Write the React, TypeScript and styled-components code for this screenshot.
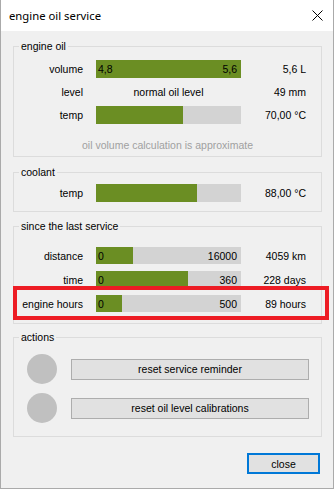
import styled, { createGlobalStyle } from 'styled-components'

const GlobalStyle = createGlobalStyle`
  html, body {
    margin: 0;
    padding: 0;
    background: #f0f0f0;
  }
  body {
    font-family: "Liberation Sans", Arial, sans-serif;
    font-size: 10.5px;
    color: #000;
  }
`

const Window = styled.div`
  width: 334px;
  height: 489px;
  box-sizing: border-box;
  border: 1px solid #aaaaaa;
  border-top: none;
  background: #f0f0f0;
  display: flex;
  flex-direction: column;
`

const TitleBar = styled.div`
  height: 31px;
  flex-shrink: 0;
  background: #ffffff;
  display: flex;
  align-items: center;
  justify-content: space-between;
  padding: 0 10px 0 8px;
`

const Title = styled.span`
  font-family: "Noto Sans", "Open Sans", sans-serif;
  font-size: 11.3px;
`

const Body = styled.div`
  display: flex;
  flex-direction: column;
  padding: 0 11px 0 12px;
`

const Group = styled.fieldset<{ $gap: number; $padTop: number; $padBottom: number }>`
  margin: ${p => p.$gap}px 0 0 0;
  padding: ${p => p.$padTop}px 0 ${p => p.$padBottom}px 0;
  border: 1px solid #dcdcdc;
  min-width: 0;
  display: flex;
  flex-direction: column;
`

const Legend = styled.legend`
  margin-left: 5px;
  padding: 0 2px;
  line-height: 16px;
  height: 16px;
`

const Rows = styled.div<{ $gap: number }>`
  display: flex;
  flex-direction: column;
  gap: ${p => p.$gap}px;
`

const Row = styled.div<{ $h: number; $highlight?: boolean }>`
  position: relative;
  display: grid;
  grid-template-columns: 69px 145px 52px;
  column-gap: 13px;
  align-items: center;
  height: ${p => p.$h}px;

  ${p => p.$highlight && `
    &::after {
      content: '';
      position: absolute;
      left: -1px;
      right: -8px;
      top: -9px;
      bottom: -8px;
      border: 4px solid #ed1c24;
      pointer-events: none;
    }
  `}
`

const Label = styled.span`
  text-align: right;
  white-space: nowrap;
`

const Value = styled.span`
  text-align: right;
  white-space: nowrap;
`

const Bar = styled.div<{ $fill: number }>`
  height: 100%;
  box-sizing: border-box;
  padding: 0 4px 0 2px;
  display: flex;
  align-items: center;
  justify-content: space-between;
  background: linear-gradient(to right, #6b8e23 ${p => p.$fill}%, #d3d3d3 ${p => p.$fill}%);
`

const Status = styled.span`
  text-align: center;
  white-space: nowrap;
`

const Note = styled.div`
  margin-top: 13px;
  line-height: 16px;
  text-align: center;
  color: #a0a0a0;
`

const ActionRow = styled.div`
  display: flex;
  align-items: center;
  gap: 14px;
  padding: 0 12px 0 13px;
  height: 30px;
`

const Lamp = styled.span`
  width: 30px;
  height: 30px;
  flex-shrink: 0;
  border-radius: 50%;
  background: #c0c0c0;
`

const Button = styled.button<{ $focused?: boolean }>`
  height: 21px;
  box-sizing: border-box;
  border: ${p => (p.$focused ? '2px solid #0078d7' : '1px solid #adadad')};
  background: #e1e1e1;
  font: inherit;
  color: #000;
  padding: 0;
`

const WideButton = styled(Button)`
  flex: 1;
`

const Footer = styled.div`
  display: flex;
  justify-content: flex-end;
  margin-top: 16px;
  padding-right: 2px;
`

const CloseButton = styled(Button)`
  width: 73px;
`

type MeterProps = {
  label: string
  value: string
  fill: number
  h: number
  low?: string
  high?: string
  highlight?: boolean
}

const Meter = ({ label, value, fill, h, low, high, highlight }: MeterProps) => (
  <Row $h={h} $highlight={highlight}>
    <Label>{label}</Label>
    <Bar $fill={fill}>
      <span>{low}</span>
      <span>{high}</span>
    </Bar>
    <Value>{value}</Value>
  </Row>
)

const CloseIcon = () => (
  <svg width="11" height="11" viewBox="0 0 11 11">
    <path d="M0.5 0.5 L10.5 10.5 M10.5 0.5 L0.5 10.5" stroke="#000" strokeWidth="1" />
  </svg>
)

const App = () => (
  <>
    <GlobalStyle />
    <Window>
      <TitleBar>
        <Title>engine oil service</Title>
        <CloseIcon />
      </TitleBar>
      <Body>
        <Group $gap={7} $padTop={6} $padBottom={3}>
          <Legend>engine oil</Legend>
          <Rows $gap={5}>
            <Meter label="volume" value="5,6 L" fill={100} h={18} low="4,8" high="5,6" />
            <Row $h={18}>
              <Label>level</Label>
              <Status>normal oil level</Status>
              <Value>49 mm</Value>
            </Row>
            <Meter label="temp" value="70,00 °C" fill={60} h={18} />
          </Rows>
          <Note>oil volume calculation is approximate</Note>
        </Group>

        <Group $gap={7} $padTop={4} $padBottom={9}>
          <Legend>coolant</Legend>
          <Meter label="temp" value="88,00 °C" fill={70} h={18} />
        </Group>

        <Group $gap={6} $padTop={13} $padBottom={11}>
          <Legend>since the last service</Legend>
          <Rows $gap={7}>
            <Meter label="distance" value="4059 km" fill={25.4} h={17} low="0" high="16000" />
            <Meter label="time" value="228 days" fill={63.3} h={17} low="0" high="360" />
            <Meter label="engine hours" value="89 hours" fill={17.8} h={17} low="0" high="500" highlight />
          </Rows>
        </Group>

        <Group $gap={5} $padTop={9} $padBottom={13}>
          <Legend>actions</Legend>
          <Rows $gap={9}>
            <ActionRow>
              <Lamp />
              <WideButton>reset service reminder</WideButton>
            </ActionRow>
            <ActionRow>
              <Lamp />
              <WideButton>reset oil level calibrations</WideButton>
            </ActionRow>
          </Rows>
        </Group>

        <Footer>
          <CloseButton $focused>close</CloseButton>
        </Footer>
      </Body>
    </Window>
  </>
)

export default App
